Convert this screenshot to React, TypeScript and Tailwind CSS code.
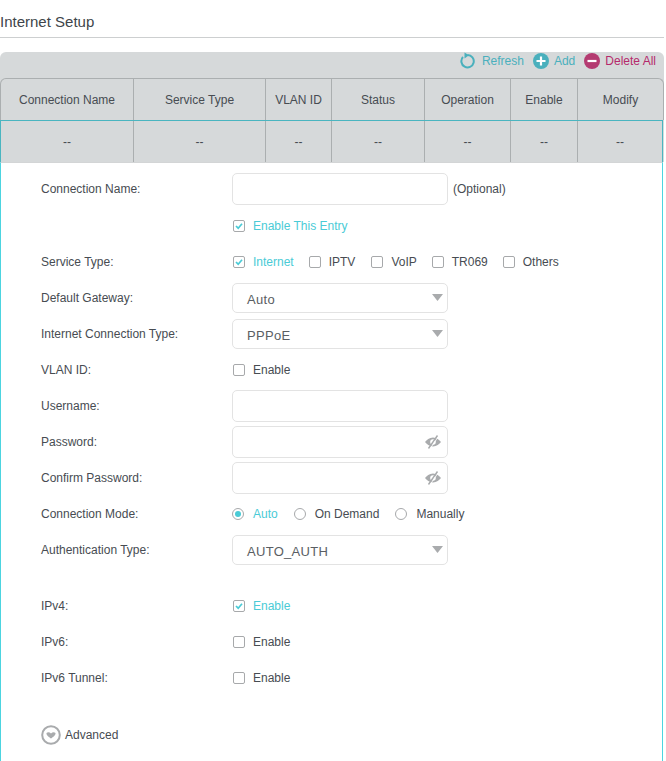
import type { ReactNode } from "react";

const columns = [
  { name: "Connection Name", width: "w-[133px]" },
  { name: "Service Type", width: "w-[132px]" },
  { name: "VLAN ID", width: "w-[66px]" },
  { name: "Status", width: "w-[93px]" },
  { name: "Operation", width: "w-[86px]" },
  { name: "Enable", width: "w-[67px]" },
  { name: "Modify", width: "w-[86px]" },
];

function Check({ checked = false, label, className = "" }: { checked?: boolean; label: string; className?: string }) {
  return (
    <span className={`flex items-center ${className}`}>
      <span className="ml-px mr-2 flex h-3 w-3 items-center justify-center rounded-[2px] border border-[#a7a9ab] bg-white">
        {checked && (
          <svg viewBox="0 0 10 10" className="h-2.5 w-2.5">
            <path d="M2 5 L4.2 7.2 L8 2.8" fill="none" stroke="#4acbd6" strokeWidth="1.7" />
          </svg>
        )}
      </span>
      <span className={checked ? "text-[#4acbd6]" : ""}>{label}</span>
    </span>
  );
}

function Radio({ checked = false, label, className = "" }: { checked?: boolean; label: string; className?: string }) {
  return (
    <span className={`flex items-center ${className}`}>
      <span className="mr-[9px] flex h-3 w-3 items-center justify-center rounded-full border border-[#a7a9ab] bg-white">
        {checked && <span className="h-1.5 w-1.5 rounded-full bg-[#4acbd6]" />}
      </span>
      <span className={checked ? "text-[#4acbd6]" : ""}>{label}</span>
    </span>
  );
}

function EyeOff() {
  return (
    <svg viewBox="0 0 16 14" className="absolute right-[6px] top-[8px] h-[14px] w-4" fill="#a9abad">
      <path
        fillRule="evenodd"
        d="M8 2.5c3.6 0 6.4 2.4 8 4.5-1.6 2.1-4.4 4.500-8 4.500S1.600 9.100 0 7c1.600-2.100 4.400-4.500 8-4.500zM8 4.200A2.800 2.800 0 1 0 8 9.800 2.800 2.800 0 0 0 8 4.200z"
      />
      <path d="M12.500 0.500 L3.500 13.500" stroke="#a9abad" strokeWidth="1.500" />
      <path d="M13.800 1 L5 13.800" stroke="#fff" strokeWidth="0.800" />
    </svg>
  );
}

function TextBox({ eye = false }: { eye?: boolean }) {
  return (
    <span className="relative block h-8 w-[216px] rounded-[5px] border border-[#e3e3e3] bg-white">
      {eye && <EyeOff />}
    </span>
  );
}

function SelectBox({ value }: { value: string }) {
  return (
    <span className="relative -mt-px flex h-[30px] w-[216px] items-center rounded-[5px] border border-[#e3e3e3] bg-white pl-[14px] pt-[4px] text-[13px] tracking-[0.3px] text-[#5a5e63]">
      {value}
      <svg viewBox="0 0 11 7" className="absolute right-[4px] top-[10px] h-[7px] w-[11px]">
        <path d="M0 0 H11 L5.500 7 Z" fill="#a9abad" />
      </svg>
    </span>
  );
}

function Row({ label, children, className = "" }: { label?: string; children: ReactNode; className?: string }) {
  return (
    <div className={`flex h-9 items-center ${className}`}>
      <div className="w-[231px] pl-10">{label}</div>
      <div className="flex items-center">{children}</div>
    </div>
  );
}

export default function App() {
  return (
    <div className="h-[761px] w-[666px] overflow-hidden bg-white font-['Liberation_Sans',Arial,sans-serif] text-xs text-[#474c52]">
      <div className="mb-[14px] h-[38px] w-[664px] border-b border-[#cdcfd0] pt-[13px] text-[15px] leading-[18px] text-[#40454a]">
        Internet Setup
      </div>

      <div className="w-[664px]">
        {/* toolbar */}
        <div className="flex h-[26px] items-center justify-end rounded-t-[6px] bg-[#d6d9da] pb-[9px] pr-2 text-[12px]">
          <svg viewBox="0 0 16 17" className="mr-[6px] h-[17px] w-4" fill="none" stroke="#4ab0bd" strokeWidth="2">
            <path d="M7.500 3A6.200 6.200 0 1 1 3 5" />
            <polygon points="4.500,0.500 9,3.300 4.500,6.500" fill="#4ab0bd" stroke="none" />
          </svg>
          <span className="mr-[9px] text-[#4ab0bd]">Refresh</span>
          <svg viewBox="0 0 16 16" className="mr-[5px] h-4 w-4">
            <circle cx="8" cy="8" r="8" fill="#4ab0bd" />
            <path d="M8 3.500V12.500M3.500 8H12.500" stroke="#fff" strokeWidth="2.200" />
          </svg>
          <span className="mr-[9px] text-[#4ab0bd]">Add</span>
          <svg viewBox="0 0 16 16" className="mr-[5px] h-4 w-4">
            <circle cx="8" cy="8" r="8" fill="#b43b71" />
            <path d="M3.500 8H12.500" stroke="#fff" strokeWidth="2.200" />
          </svg>
          <span className="text-[#b5296b]">Delete All</span>
        </div>

        {/* table */}
        <div className="bg-[#d6d9da]">
          <div className="flex h-[42px] rounded-t-[6px] border-x border-t border-[#abafb0] border-b-0">
            {columns.map((col, i) => (
              <div
                key={col.name}
                className={`flex items-center justify-center border-[#abafb0] ${col.width} ${i === columns.length - 1 ? "flex-1" : "border-r"}`}
              >
                {col.name}
              </div>
            ))}
          </div>
          <div className="flex h-[42px] w-[663px] border-x border-t border-[#4ab5c0]">
            {columns.map((col, i) => (
              <div
                key={col.name}
                className={`flex items-center justify-center border-[#abafb0] pt-px ${col.width} ${i === columns.length - 1 ? "flex-1" : "border-r"}`}
              >
                --
              </div>
            ))}
          </div>
        </div>

        {/* form */}
        <div className="h-[600px] w-[663px] border-x border-t border-x-[#4cd4e0] border-t-[#d3d5d6] bg-white pt-2">
          <Row label="Connection Name:" className="mb-px">
            <TextBox />
            <span className="ml-[5px]">(Optional)</span>
          </Row>
          <Row>
            <Check checked label="Enable This Entry" />
          </Row>
          <Row label="Service Type:">
            <Check checked label="Internet" className="mr-[14px]" />
            <Check label="IPTV" className="mr-[15px]" />
            <Check label="VoIP" className="mr-[14px]" />
            <Check label="TR069" className="mr-[14px]" />
            <Check label="Others" />
          </Row>
          <Row label="Default Gateway:">
            <SelectBox value="Auto" />
          </Row>
          <Row label="Internet Connection Type:">
            <SelectBox value="PPPoE" />
          </Row>
          <Row label="VLAN ID:">
            <Check label="Enable" />
          </Row>
          <Row label="Username:">
            <TextBox />
          </Row>
          <Row label="Password:">
            <TextBox eye />
          </Row>
          <Row label="Confirm Password:">
            <TextBox eye />
          </Row>
          <Row label="Connection Mode:">
            <Radio checked label="Auto" className="mr-4" />
            <Radio label="On Demand" className="mr-4" />
            <Radio label="Manually" />
          </Row>
          <Row label="Authentication Type:">
            <SelectBox value="AUTO_AUTH" />
          </Row>

          <div className="h-5" />
          <Row label="IPv4:">
            <Check checked label="Enable" />
          </Row>
          <Row label="IPv6:">
            <Check label="Enable" />
          </Row>
          <Row label="IPv6 Tunnel:">
            <Check label="Enable" />
          </Row>

          <div className="ml-10 mt-[29px] flex items-center">
            <svg viewBox="0 0 20 20" className="mr-[4px] h-5 w-5">
              <circle cx="10" cy="10" r="8.800" fill="#fff" stroke="#a9abad" strokeWidth="2" />
              <path d="M5.500 8 C6.800 6.800 8.700 7.200 10 8.500 C11.300 7.200 13.200 6.800 14.500 8 C15 10 12 12.200 10 13.500 C8 12.200 5 10 5.500 8 Z" fill="#a9abad" />
            </svg>
            Advanced
          </div>
        </div>
      </div>
    </div>
  );
}
